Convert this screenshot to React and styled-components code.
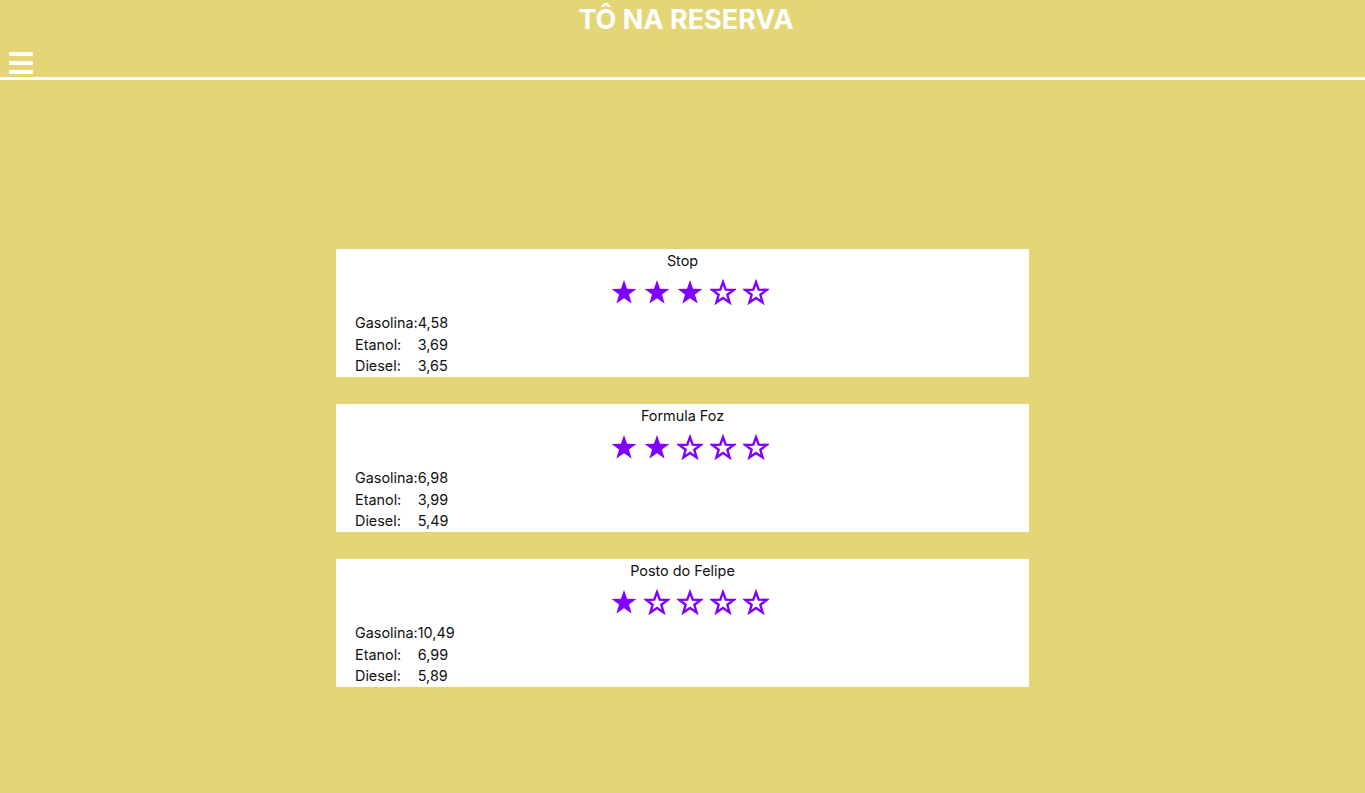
import React from "react";
import styled, {createGlobalStyle} from "styled-components";

const GlobalStyle = createGlobalStyle`
    html, body {
        margin: 0;
        padding: 0;
        background: #e4d676;
        font-family: Inter, "Noto Sans", sans-serif;
    }
`;

const postos = [
    {nome: "Stop", nota: 3, gasolina: "4,58", etanol: "3,69", diesel: "3,65"},
    {nome: "Formula Foz", nota: 2, gasolina: "6,98", etanol: "3,99", diesel: "5,49"},
    {nome: "Posto do Felipe", nota: 1, gasolina: "10,49", etanol: "6,99", diesel: "5,89"},
];

// pontos de uma estrela de 5 pontas
const starPoints = (cx, cy, R, r) => {
    const pts = [];
    for (let i = 0; i < 10; i++) {
        const rad = i % 2 === 0 ? R : r;
        const a = (-90 + i * 36) * Math.PI / 180;
        pts.push(`${(cx + rad * Math.cos(a)).toFixed(2)},${(cy + rad * Math.sin(a)).toFixed(2)}`);
    }
    return pts.join(" ");
};

function StarIcon({filled}) {
    return (
        <StarSvg viewBox="0 0 26 26" width="26" height="26">
            {filled
                ? <polygon points={starPoints(13, 14, 13, 5.2)} fill="#8000ff"/>
                : <polygon points={starPoints(13, 14.4, 11.2, 4.6)} fill="none" stroke="#8000ff"
                           strokeWidth="2.4" strokeLinejoin="miter"/>}
        </StarSvg>
    );
}

export default function App() {
    return (
        <Page>
            <GlobalStyle/>
            <Header>
                <Title>TÔ NA RESERVA</Title>
                <Menu aria-label="menu">
                    <span/>
                    <span/>
                    <span/>
                </Menu>
            </Header>
            <List>
                {postos.map((posto) => (
                    <Card key={posto.nome}>
                        <Name>{posto.nome}</Name>
                        <Stars>
                            {[1, 2, 3, 4, 5].map((n) => (
                                <StarIcon key={n} filled={n <= posto.nota}/>
                            ))}
                        </Stars>
                        <Prices>
                            <tbody>
                            <tr><td>Gasolina:</td><td>{posto.gasolina}</td></tr>
                            <tr><td>Etanol:</td><td>{posto.etanol}</td></tr>
                            <tr><td>Diesel:</td><td>{posto.diesel}</td></tr>
                            </tbody>
                        </Prices>
                    </Card>
                ))}
            </List>
        </Page>
    );
}

const Page = styled.div`
    min-height: 793px;
`;

const Header = styled.header`
    height: 77px;
    border-bottom: 3px solid #fff;
    display: flex;
    flex-direction: column;
`;

const Title = styled.h1`
    margin: 0;
    padding: 4px 0 0 7px;
    text-align: center;
    color: #fff;
    font-size: 27px;
    font-weight: 700;
    line-height: 32px;
`;

const Menu = styled.div`
    margin: 16px 0 0 9px;
    width: 24px;
    display: flex;
    flex-direction: column;
    gap: 5px;

    span {
        display: block;
        height: 4px;
        border-radius: 1px;
        background: #fff;
    }
`;

const List = styled.main`
    padding-top: 169px;
    display: flex;
    flex-direction: column;
    align-items: center;
    gap: 27px;
`;

const Card = styled.section`
    width: 693px;
    height: 128px;
    background: #fff;
    box-sizing: border-box;
    padding: 3px 0 0 19px;
    color: #111;
    font-size: 14.4px;
`;

const Name = styled.div`
    text-align: center;
    line-height: 18px;
    margin-left: -19px;
`;

const Stars = styled.div`
    display: flex;
    justify-content: center;
    gap: 7px;
    height: 42px;
    align-items: center;
    padding: 2px 0 0 0;
    margin-left: -5px;
    box-sizing: border-box;
`;

const StarSvg = styled.svg`
    display: block;
`;

const Prices = styled.table`
    border-spacing: 0;

    td {
        padding: 0;
        line-height: 1.5;
    }
`;
